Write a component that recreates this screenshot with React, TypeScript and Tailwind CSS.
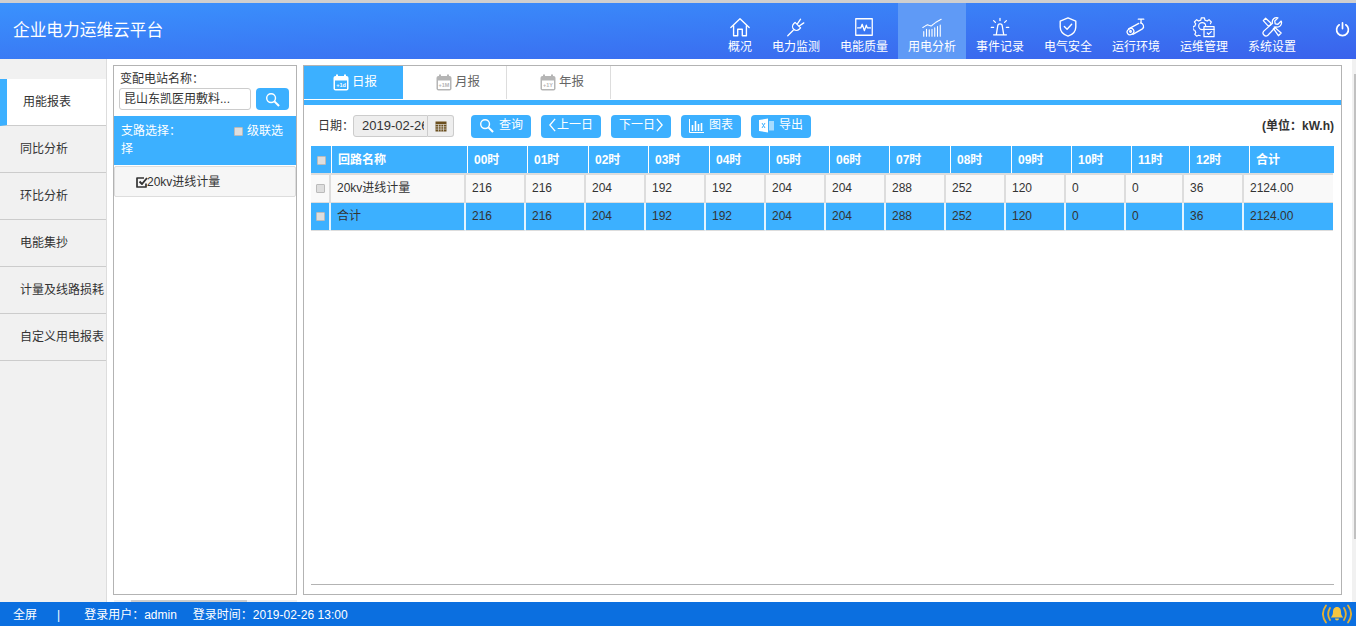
import React from "react";

const font = '[font-family:"Liberation_Sans","Noto_Sans_CJK_SC",sans-serif]';

const S = ({ children, sw = 1.4 }: any) => (
  <svg viewBox="0 0 24 24" className="w-[22px] h-[22px]" fill="none" stroke="currentColor" strokeWidth={sw} strokeLinecap="round" strokeLinejoin="round">
    {children}
  </svg>
);

const navIcons: Record<string, React.ReactNode> = {
  home: (
    <S sw={1.5}>
      <path d="M2 12.500 12 3l10 9.500" />
      <path d="M5 10.500V21.500h4.500v-7h5v7H19V10.500" />
    </S>
  ),
  plug: (
    <S>
      <path d="M9.500 8.500 11 7l6 6-1.500 1.500a4.200 4.200 0 0 1-6-6z" />
      <path d="m13.500 8.500 3.500-5M15.500 11l5-3.500M9 15.500 3 21.500" />
    </S>
  ),
  pulse: (
    <S>
      <rect x="3" y="3" width="18" height="18" />
      <path d="M5 13h3.500l1.500-4 2.500 7 2-6 1 3H19" />
    </S>
  ),
  chart: (
    <S sw={1.2}>
      <path d="M2 12.500l5-3 4 1.500 5-4 6-3.500" strokeDasharray="1.800 1" />
      <path d="M3 22v-5M6 22v-7.500M9 22v-7M12 22v-7.500M15 22v-9M18 22v-10.500M21 22V10" />
    </S>
  ),
  alarm: (
    <S>
      <path d="M8 20 9.500 11a2.500 2.500 0 0 1 5 0L16 20" />
      <path d="M5 20.500h14M12 2.500V5M5 5l2 2M19 5l-2 2M2.500 12.500h2.500M19 12.500h2.500" />
    </S>
  ),
  shield: (
    <S sw={1.5}>
      <path d="M12 2 20.500 5.500v6.500c0 5-4 8.500-8.500 10-4.500-1.500-8.500-5-8.500-10V5.500z" />
      <path d="m8 11.500 3 3 5-5.500" />
    </S>
  ),
  pipe: (
    <S>
      <ellipse cx="6" cy="17" rx="3.200" ry="3.800" transform="rotate(55 6 17)" />
      <circle cx="6" cy="17" r="0.900" />
      <path d="M4 14 15 8M8.500 20 19 14c2.500-2 1-6-2-6.500" />
      <path d="M17.500 7.500V3.500M14.500 3.500h6" />
    </S>
  ),
  gear: (
    <S sw={1.3}>
      <path d="M9 2h3.500l.5 2.500 2.500 1 2-1.500 2.500 2.500-1 2M9 2 8.500 4.500l-2.500 1-2-1.500L1.500 6.500l1.500 2-1 2.500-2 .5v3.500l2 .5 1 2.500-1 2 2 2 2-1 2 .500" />
      <circle cx="10" cy="11" r="3.800" />
      <rect x="12" y="11.500" width="11" height="11" fill="#3a72f1" />
      <path d="M12 14.500h11M15.500 18.500l1.500 1.500 3-3" />
    </S>
  ),
  tools: (
    <S sw={1.4}>
      <path d="M2.500 5 5 2.500l6 5.500-1 2-2 1z" />
      <path d="m13.500 13.500 5.500 8 3-3-7.500-6.500" />
      <path d="M22 5.500 18.500 9 15.500 8.500 15 5.500 18.500 2c-3.500-1-7 1.500-6 6L3 16.500c-2.500 3 1.500 7 4.500 4.500l8.500-9c4.500 1 7.500-3 6-6.500z" />
    </S>
  ),
};

const nav = [
  ["概况", "home", "w-[44px]"],
  ["电力监测", "plug", "w-[68px]"],
  ["电能质量", "pulse", "w-[68px]"],
  ["用电分析", "chart", "w-[68px]"],
  ["事件记录", "alarm", "w-[68px]"],
  ["电气安全", "shield", "w-[68px]"],
  ["运行环境", "pipe", "w-[68px]"],
  ["运维管理", "gear", "w-[68px]"],
  ["系统设置", "tools", "w-[68px]"],
];

const Check = ({ className = "" }: { className?: string }) => (
  <span className={`inline-block w-[9px] h-[9px] rounded-[1px] bg-[#dedede] border border-[#bbb] shrink-0 ${className}`} />
);

const Calendar = ({ color, label, inner }: { color: string; label: string; inner: string }) => (
  <svg viewBox="0 0 16 17" className="w-4 h-[17px]">
    <rect x="0.500" y="2" width="15" height="14.500" rx="2" fill={color} />
    <rect x="2" y="6.500" width="12" height="8.500" fill={inner} />
    <rect x="3" y="0.500" width="2" height="3" fill={color} />
    <rect x="11" y="0.500" width="2" height="3" fill={color} />
    <text x="8" y="13.300" textAnchor="middle" fontSize="5.500" fontFamily="Liberation Sans" fontWeight="bold" fill={color}>{label}</text>
  </svg>
);

const Btn = ({ icon, children }: any) => (
  <button className="w-[60px] h-[23px] rounded-[4px] bg-[#3cb0ff] text-white text-[12px] flex items-center justify-center gap-[5px] pb-[2px]">
    {icon}
    {children}
  </button>
);

const Search = ({ c = "w-[15px] h-[15px]" }: { c?: string }) => (
  <svg viewBox="0 0 16 16" className={c} fill="none" stroke="#fff">
    <circle cx="6.500" cy="6.500" r="4.700" strokeWidth="1.500" />
    <path d="m10 10 5 5" strokeWidth="2.200" />
  </svg>
);

const heads = ["回路名称", "00时", "01时", "02时", "03时", "04时", "05时", "06时", "07时", "08时", "09时", "10时", "11时", "12时", "合计"];
const headW = ["w-[136px]", "w-[60px]", "w-[61px]", "w-[60px]", "w-[61px]", "w-[60px]", "w-[60px]", "w-[60px]", "w-[61px]", "w-[61px]", "w-[60px]", "w-[60px]", "w-[58px]", "w-[60px]", "w-[84px]"];
const bodyW = ["w-[135px]", "w-[60px]", "w-[60px]", "w-[60px]", "w-[60px]", "w-[60px]", "w-[60px]", "w-[60px]", "w-[60px]", "w-[60px]", "w-[60px]", "w-[60px]", "w-[58px]", "w-[60px]", "w-[89px]"];
const vals = ["216", "216", "204", "192", "192", "204", "204", "288", "252", "120", "0", "0", "36", "2124.00"];

const side = ["用能报表", "同比分析", "环比分析", "电能集抄", "计量及线路损耗", "自定义用电报表"];

export default function App() {
  return (
    <div className={`${font} relative w-[1356px] h-[626px] overflow-hidden flex flex-col bg-white text-[12px] text-[#333] border-t-[3px] border-[#cfcfcf]`}>
      <header className="h-[56px] shrink-0 flex items-stretch text-white bg-gradient-to-br from-[#3a92fd] to-[#3a62ec]">
        <div className="ml-[13px] mt-[16px] text-[16.700px] leading-[24px] flex-1 whitespace-nowrap">企业电力运维云平台</div>
        <nav className="flex">
          {nav.map(([t, ic, w], i) => (
            <div key={t} className={`${w} flex flex-col items-center pt-[13px] ${i === 3 ? "bg-[#5f9af6]" : ""}`}>
              <div className="w-[22px] h-[22px]">{navIcons[ic]}</div>
              <div className="mt-[1px] leading-[16px] whitespace-nowrap">{t}</div>
            </div>
          ))}
        </nav>
        <div className="w-[50px] pl-[29px] pt-[18px]">
          <svg viewBox="0 0 16 16" className="w-[15px] h-[16px]" fill="none" stroke="#fff" strokeWidth="1.800" strokeLinecap="round">
            <path d="M4.500 3.500a6.300 6.300 0 1 0 7 0M8 1.500v6" />
          </svg>
        </div>
      </header>

      <div className="flex-1 flex min-h-0">
        <aside className="w-[107px] shrink-0 bg-[#f1f1f1] border-r border-[#ddd] pt-[20px]">
          {side.map((t, i) => (
            <div
              key={t}
              className={`h-[47px] flex items-center border-b border-[#ccc] whitespace-nowrap ${i === 0 ? "bg-white border-l-[7px] border-l-[#3cb0ff] pl-[16px]" : "pl-[20px]"}`}
            >
              {t}
            </div>
          ))}
        </aside>

        <div className="flex-1 flex flex-col min-w-0">
          <div className="flex-1 flex gap-[6px] pl-[6px] pt-[6px] pb-[7px] pr-[14px] min-h-0">
            <section className="w-[184px] shrink-0 border border-[#b3b3b3] flex flex-col">
              <div className="px-[5px] pt-[6px] h-[50px] shrink-0">
                <div className="leading-[15px] pl-[1px]">变配电站名称：</div>
                <div className="flex mt-[1px] gap-[5px]">
                  <div className="w-[132px] h-[22px] border border-[#ccc] rounded-[3px] px-[4px] leading-[20px] truncate">昆山东凯医用敷料...</div>
                  <button className="w-[33px] h-[22px] rounded-[4px] bg-[#3cb0ff] flex items-center justify-center"><Search /></button>
                </div>
              </div>
              <div className="h-[49px] shrink-0 bg-[#3cb0ff] text-white px-[7px] pt-[6px] leading-[18px]">
                <div className="flex">
                  <span className="flex-1">支路选择：</span>
                  <span className="flex items-center gap-[4px] mr-[6px]"><Check />级联选</span>
                </div>
                <div>择</div>
              </div>
              <div className="h-[31px] shrink-0 mt-[1px] bg-[#f6f6f6] border border-[#ddd] rounded-[2px] flex items-center pl-[21px]">
                <svg viewBox="0 0 12 12" className="w-[12px] h-[12px] -mr-px" fill="none" stroke="#333" strokeWidth="1.700" strokeLinejoin="round">
                  <path d="M10 7.500V11H1V2h7" />
                  <path d="m3.500 5.500 2.500 2.500 5-6" strokeWidth="1.900" />
                </svg>
                <span>20kv进线计量</span>
              </div>
            </section>

            <section className="flex-1 border border-[#b3b3b3] flex flex-col min-w-0">
              <div className="h-[33px] shrink-0 flex text-[12.500px] text-[#666] mb-px">
                <div className="w-[99px] bg-[#3cb0ff] text-white flex items-center pl-[29px] gap-[3px]">
                  <Calendar color="#fff" inner="#3cb0ff" label="+1d" />日报
                </div>
                <div className="w-[104px] border-r border-[#ddd] flex items-center pl-[33px] gap-[3px]">
                  <Calendar color="#b5b5b5" inner="#fff" label="+1M" />月报
                </div>
                <div className="w-[104px] border-r border-[#ddd] flex items-center pl-[33px] gap-[3px]">
                  <Calendar color="#b5b5b5" inner="#fff" label="+1Y" />年报
                </div>
              </div>
              <div className="h-[5px] shrink-0 bg-[#3cb0ff]" />
              <div className="flex-1 flex flex-col px-[7px] min-h-0">
                <div className="h-[41px] shrink-0 flex items-center pl-[7px] pb-[1px] pt-[2px]">
                  <span className="w-[35px] shrink-0 whitespace-nowrap">日期：</span>
                  <div className="flex w-[101px] h-[22px] shrink-0">
                    <div className="w-[75px] bg-[#eee] border border-[#ccc] rounded-l-[3px] pl-[8px] pr-[3px]">
                      <div className="overflow-hidden whitespace-nowrap text-[13px] leading-[20px]">2019-02-26</div>
                    </div>
                    <div className="w-[26px] bg-[#eee] border border-l-0 border-[#ccc] rounded-r-[3px] flex items-center justify-center">
                      <svg viewBox="0 0 12 12" className="w-[12px] h-[12px]"><path d="M.5 1.500h11v10H.5z" fill="#6b4f1e" /><path d="M.5 4.500h11M.5 6.800h11M.5 9.100h11M3.500 4.500v7M6 4.500v7M8.500 4.500v7" stroke="#eee" strokeWidth=".6" /></svg>
                    </div>
                  </div>
                  <div className="flex gap-[10px] ml-[17px]">
                    <Btn icon={<Search />}>查询</Btn>
                    <Btn icon={<svg viewBox="0 0 8 16" className="w-[7px] h-[16px] -mr-[4px]" fill="none" stroke="#fff" strokeWidth="1.500"><path d="M7 1 1 8l6 7" /></svg>}>上一日</Btn>
                    <Btn>下一日<svg viewBox="0 0 8 16" className="w-[7px] h-[16px] -ml-[4px]" fill="none" stroke="#fff" strokeWidth="1.500"><path d="m1 1 6 7-6 7" /></svg></Btn>
                    <Btn icon={<svg viewBox="0 0 15 15" className="w-[15px] h-[15px]" fill="none" stroke="#fff"><path d="M.5 1v13.500H15" /><path d="M3.500 13V7M6.500 13V3M9.500 13V6M12.500 13V5" strokeWidth="1.600" /></svg>}>图表</Btn>
                    <Btn icon={<svg viewBox="0 0 15 15" className="w-[15px] h-[15px]"><path d="M0 2 9 .5v14L0 13z" fill="#fff" /><path d="M10 3h5v9.500h-5z" fill="#a8dcff" /><path d="M3 5l3 5M6 5l-3 5" stroke="#3cb0ff" /></svg>}>导出</Btn>
                  </div>
                  <span className="ml-auto font-bold whitespace-nowrap">(单位：kW.h)</span>
                </div>

                <table className="table-fixed border-separate border-spacing-0 w-[1023px] shrink-0">
                  <colgroup>
                    <col className="w-[21px]" />
                    {headW.map((w, i) => <col key={i} className={w} />)}
                  </colgroup>
                  <thead>
                    <tr className="h-[27px] bg-[#3cb0ff] text-white">
                      <th className="border-r border-white text-center p-0"><Check className="align-middle" /></th>
                      {heads.map((h) => (
                        <th key={h} className="text-left font-bold text-[12px] pl-[6px] border-r border-white last:border-r-0 whitespace-nowrap">{h}</th>
                      ))}
                    </tr>
                  </thead>
                </table>
                <table className="table-fixed border-separate border-spacing-0 w-[1022px] shrink-0">
                  <colgroup>
                    <col className="w-[20px]" />
                    {bodyW.map((w, i) => <col key={i} className={w} />)}
                  </colgroup>
                  <tbody>
                    <tr className="h-[30px] bg-[#f9f9f9]">
                      <td className="text-center border-t-2 border-b border-r-2 border-[#ddd] p-0 pb-[2px]"><Check className="align-middle" /></td>
                      <td className="pl-[6px] pb-[2px] border-t-2 border-b border-r-2 border-[#ddd]">20kv进线计量</td>
                      {vals.map((v, i) => <td key={i} className="pl-[6px] pb-[2px] border-t-2 border-b border-r-2 border-[#ddd] last:border-r-0">{v}</td>)}
                    </tr>
                    <tr className="h-[28px] bg-[#3cb0ff]">
                      <td className="text-center border-b border-r-2 border-[#ddd] border-r-[#e4f4ff] p-0 pb-[2px]"><Check className="align-middle" /></td>
                      <td className="pl-[6px] pb-[2px] border-b border-r-2 border-[#ddd] border-r-[#e4f4ff]">合计</td>
                      {vals.map((v, i) => <td key={i} className="pl-[6px] pb-[2px] border-b border-r-2 border-[#ddd] border-r-[#e4f4ff] last:border-r-0">{v}</td>)}
                    </tr>
                  </tbody>
                </table>
                <div className="mt-auto mb-[9px] h-px shrink-0 bg-[#b3b3b3]" />
              </div>
            </section>
          </div>
        </div>
      </div>

      <footer className="h-[24px] shrink-0 bg-[#0b6fe0] text-white flex items-center pl-[13px] pt-[2px] leading-[22px]">
        <span>全屏</span>
        <span className="ml-[20px]">|</span>
        <span className="ml-[24px]">登录用户：admin</span>
        <span className="ml-[16px]">登录时间：2019-02-26 13:00</span>
        <svg viewBox="0 0 30 20" className="ml-auto mr-[4px] w-[30px] h-[20px] -mt-[2px]" fill="none" stroke="#e6b030" strokeWidth="1.800" strokeLinecap="round">
          <path d="M4 1.500C0 7 0 13 4 18.500M8 4C5.500 8 5.500 12 8 16M26 1.500c4 5.500 4 11.500 0 17M22 4c2.500 4 2.500 8 0 12" />
          <path d="M15 3c-3 0-4 2.500-4 5 0 3-1 4-2.300 5.500h12.600C20 12 19 11 19 8c0-2.500-1-5-4-5z" fill="#f5c542" stroke="none" />
          <path d="M13 14.500a2 2 0 0 0 4 0z" fill="#f5c542" stroke="none" />
        </svg>
      </footer>

      <div className="absolute right-0 top-[56px] bottom-[24px] w-[4px] bg-[#f1f1f1]">
        <div className="absolute right-0 top-[15px] w-[2px] h-[465px] bg-[#c1c1c1]" />
      </div>
      <div className="absolute left-[114px] bottom-[24px] w-[183px] h-[2px] bg-[#f1f1f1]">
        <div className="ml-[17px] w-[116px] h-[2px] bg-[#ccc]" />
      </div>
    </div>
  );
}
